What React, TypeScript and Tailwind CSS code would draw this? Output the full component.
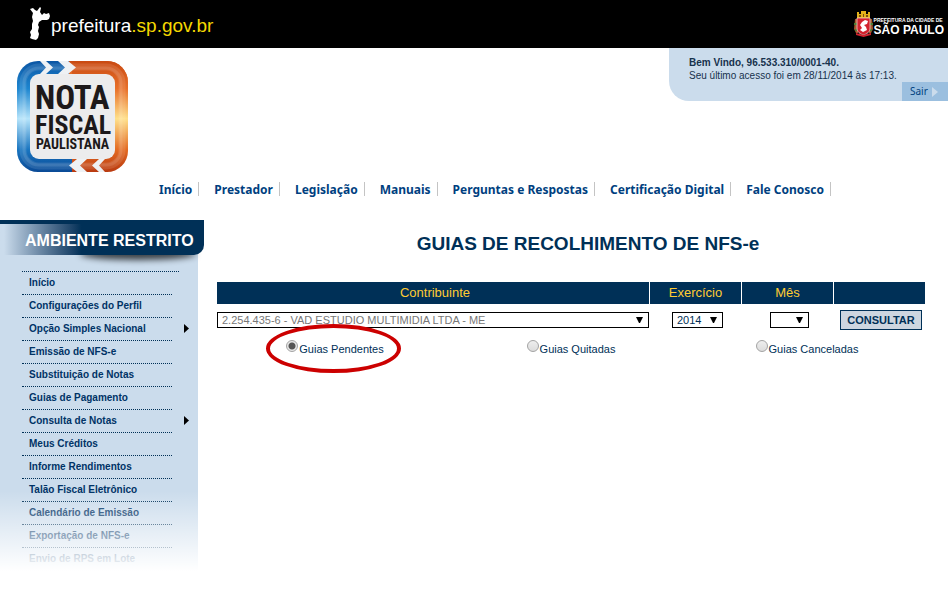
import React from "react";

const nav = ["Início", "Prestador", "Legislação", "Manuais", "Perguntas e Respostas", "Certificação Digital", "Fale Conosco"];

const menu: { label: string; sub?: boolean }[] = [
  { label: "Início" },
  { label: "Configurações do Perfil" },
  { label: "Opção Simples Nacional", sub: true },
  { label: "Emissão de NFS-e" },
  { label: "Substituição de Notas" },
  { label: "Guias de Pagamento" },
  { label: "Consulta de Notas", sub: true },
  { label: "Meus Créditos" },
  { label: "Informe Rendimentos" },
  { label: "Talão Fiscal Eletrônico" },
  { label: "Calendário de Emissão" },
  { label: "Exportação de NFS-e" },
  { label: "Envio de RPS em Lote" },
];

function CityMap() {
  return (
    <svg width="22" height="34" viewBox="0 0 22 34" fill="#fff" aria-hidden="true">
      <path d="M1 2 L4 1 L6 3 L8 4 L11 0 L12 1 L11 5 L13 8 L15 6 L17 7 L20 6 L21 9 L20 12 L18 13 L13 13 L10 15 L9 18 L10 20 L9 24 L10 27 L9 31 L7 33 L3 32 L1 31 L2 28 L1 25 L3 22 L3 17 L4 14 L3 10 L4 6 Z" />
    </svg>
  );
}

function CityArms() {
  return (
    <svg width="19" height="26" viewBox="0 0 19 26" aria-hidden="true">
      <path d="M3 1h2v2h2V0h5v3h2V1h2v6H3z" fill="#e3b21b" />
      <path d="M5 4h2v2H5z M9 3h1v3H9z M12 4h2v2h-2z" fill="#7c4a10" />
      <path d="M1 8h3v14H2L0 18z M15 8h3l1 10-2 4h-2z" fill="#a7582e" />
      <path d="M0 12h3v2H0z M16 12h3v2h-3z M1 18h2v2H1z M16 18h2v2h-2z" fill="#4f7d34" />
      <path d="M3 7h13v10c0 4-3 6-6.500 7C6 23 3 21 3 17z" fill="#d3222e" stroke="#f3dcd8" strokeWidth="0.7" />
      <path d="M6 14l2-3 3-2 3 1-1 3-3 1 2 2 1 3-4 2-3-2 2-2z" fill="#fff" />
      <path d="M2 22l7.500 2 7.500-2v2l-7.500 2L2 24z" fill="#d3222e" />
    </svg>
  );
}

function NotaFiscalLogo() {
  return (
    <svg width="111" height="111" viewBox="0 0 111 111" role="img" aria-label="Nota Fiscal Paulistana">
      <defs>
        <linearGradient id="blue" x1="0" y1="0" x2="0" y2="1">
          <stop offset="0" stopColor="#0b56a4" />
          <stop offset="0.25" stopColor="#1d86d0" />
          <stop offset="0.52" stopColor="#b5e4fb" />
          <stop offset="0.8" stopColor="#1975c0" />
          <stop offset="1" stopColor="#0a4a96" />
        </linearGradient>
        <linearGradient id="orange" x1="0" y1="0" x2="0" y2="1">
          <stop offset="0" stopColor="#c94a12" />
          <stop offset="0.25" stopColor="#e8702a" />
          <stop offset="0.52" stopColor="#ffe08a" />
          <stop offset="0.8" stopColor="#e36a22" />
          <stop offset="1" stopColor="#b93a10" />
        </linearGradient>
        <clipPath id="frame"><rect width="111" height="111" rx="21" /></clipPath>
      </defs>
      <g clipPath="url(#frame)">
        <rect width="56" height="111" fill="url(#blue)" />
        <rect x="52" width="59" height="56" fill="url(#orange)" />
        <rect width="111" height="111" x="55" fill="url(#orange)" />
        <rect x="6" y="6" width="99" height="99" rx="16" fill="none" stroke="#fff" strokeOpacity="0.1" strokeWidth="7" />
        <rect x="7" y="7" width="97" height="97" rx="15" fill="none" stroke="#fff" strokeOpacity="0.1" strokeWidth="3" />
        <path d="M23 0h6l7 6.500-7 6.500h-6l6-6.500z M41 0h10l8 6.500-8 6.500H41l7-6.500z" fill="#eef1f4" />
        <path d="M23 0h6l7 6.500-7 6.500h-6l6-6.500z M41 0h10l8 6.500-8 6.500H41l7-6.500z" fill="#eef1f4" transform="rotate(180 55.5 55.5)" />
        <rect x="13" y="13" width="85" height="85" rx="9" fill="#ececed" />
      </g>
      <g fill="#1d191a" fontFamily="'Roboto Condensed', 'Liberation Sans', sans-serif" fontWeight="700">
        <text x="18" y="48" fontSize="33">NOTA</text>
        <text x="18" y="73" fontSize="26">FISCAL</text>
        <text x="19" y="88" fontSize="14">PAULISTANA</text>
      </g>
    </svg>
  );
}

function Arrow({ className }: { className: string }) {
  return (
    <svg className={className} width="7" height="6" viewBox="0 0 7 6" aria-hidden="true">
      <path d="M0 0h7L4 6H3z" fill="#000" />
    </svg>
  );
}

function Picker({ label, options, className }: { label: string; options: string[]; className: string }) {
  return (
    <span className="relative flex">
      <select aria-label={label} className={`h-4 appearance-none border border-black bg-white pl-1 leading-[14px] outline-none ${className}`}>
        {options.map((o) => <option key={o}>{o}</option>)}
      </select>
      <Arrow className="pointer-events-none absolute right-1.5 top-1 mt-px" />
    </span>
  );
}

function Guide({ label, checked, ringed }: { label: string; checked?: boolean; ringed?: boolean }) {
  return (
    <div className="flex justify-center">
      <label className="relative flex items-start text-[11px] leading-4 text-[#003057]">
        <input
          type="radio"
          name="guias"
          defaultChecked={checked}
          className="mr-px size-3 appearance-none rounded-full border border-[#a3a3a3] bg-linear-to-b from-[#eeeeee] to-[#dcdcdc] checked:bg-[radial-gradient(circle,#555_3px,#e8e8e8_4px)]"
        />
        <span className="pt-px">{label}</span>
        {ringed && <span className="pointer-events-none absolute -left-5 -top-4 h-[49px] w-[135px] rounded-[50%] border-4 border-[#cc0000]" />}
      </label>
    </div>
  );
}

export default function App() {
  return (
    <div className="bg-white font-['Liberation_Sans',Arial,sans-serif]">
      <header className="flex h-12 items-center justify-between bg-black pl-[29px] pr-1">
        <a href="#" className="flex items-center text-[19px] leading-6 text-white">
          <CityMap />
          <span className="pt-1">prefeitura<span className="text-[#f5d800]">.sp.gov.br</span></span>
        </a>
        <div className="flex items-center gap-px text-white">
          <CityArms />
          <div className="pt-1 font-bold">
            <div className="text-[5px] leading-[7px]">PREFEITURA DA CIDADE DE</div>
            <div className="text-[12px] leading-3">SÃO PAULO</div>
          </div>
        </div>
      </header>

      <div className="flex h-[134px] items-start justify-between pl-[17px]">
        <div className="pt-[13px]"><NotaFiscalLogo /></div>
        <div className="w-[279px] rounded-bl-[20px] bg-[#cbdcec] pl-5 pt-2 text-[10px] leading-[13px] text-[#17324d]">
          <p className="font-bold">Bem Vindo, 96.533.310/0001-40.</p>
          <p>Seu último acesso foi em 28/11/2014 às 17:13.</p>
          <div className="flex justify-end">
            <a href="#" className="flex h-[19px] w-[46px] items-center gap-1 bg-[#9bbfdf] pl-2 font-['Noto_Sans',sans-serif] text-[#003f7f]">
              Sair
              <svg width="6" height="10" viewBox="0 0 6 10" aria-hidden="true"><path d="M0 0l6 5-6 5z" fill="#cbdcec" /></svg>
            </a>
          </div>
        </div>
      </div>

      <nav className="flex h-[38px] items-start pl-[159px] font-['Noto_Sans',sans-serif] text-[12px] font-bold leading-4 text-[#003f7f]">
        {nav.map((n) => (
          <a key={n} href="#" className="mr-[15px] h-3.5 whitespace-nowrap border-r border-[#c4c4c4] pr-1.5">{n}</a>
        ))}
      </nav>

      <div className="flex items-start">
        <aside className="relative w-[198px] shrink-0 bg-[#cbdcec]">
          <h2 className="relative z-10 h-[35px] w-[204px] rounded-br-[10px] border-t-4 border-[#003057] bg-linear-to-r from-[#cbdcec] from-2% via-[#003057] via-40% to-[#003057] pl-[25px] pt-[7px] text-[16px] font-bold leading-5 text-white">
            AMBIENTE RESTRITO
          </h2>
          <div className="absolute left-20 top-7 h-3 w-[116px] rounded-[50%] bg-black/70 blur-[3px]" />
          <div className="ml-[22px] mt-4 w-[157px] border-t border-dotted border-[#003057]" />
          <ul className="pl-[22px]">
            {menu.map((m, i) => (
              <li key={m.label} className="flex h-[23px] items-center">
                <a href="#" className={`flex h-full w-[150px] items-center pb-0.5 pl-[7px] text-[10px] font-bold text-[#003366] ${i < menu.length - 1 ? "border-b border-dotted border-[#003057]" : ""}`}>
                  {m.label}
                </a>
                {m.sub && <svg className="mb-0.5 ml-3" width="5" height="9" viewBox="0 0 5 9" aria-hidden="true"><path d="M0 0l5 4.500-5 4.500z" /></svg>}
              </li>
            ))}
          </ul>
          <div className="pointer-events-none absolute inset-x-0 bottom-0 h-20 bg-linear-to-b from-white/0 to-white" />
        </aside>

        <main className="min-w-0 flex-1 pl-[19px] pr-[23px] pt-3">
          <h1 className="pl-[34px] text-center text-[19px] font-bold leading-6 text-[#003057]">GUIAS DE RECOLHIMENTO DE NFS-e</h1>
          <form onSubmit={(e) => e.preventDefault()}>
            <div className="mt-[26px] grid grid-cols-[1fr_91px_91px_91px] gap-x-px text-center text-[13px] leading-[22px] text-[#ffcc33]">
              <div className="bg-[#003057] pl-1">Contribuinte</div>
              <div className="bg-[#003057]">Exercício</div>
              <div className="bg-[#003057]">Mês</div>
              <div className="bg-[#003057]" />
            </div>
            <div className="mt-1.5 grid grid-cols-[1fr_91px_91px_91px] items-center gap-x-px text-[11px]">
              <Picker label="Contribuinte" options={["2.254.435-6 - VAD ESTUDIO MULTIMIDIA LTDA - ME"]} className="w-full text-[#777777]" />
              <div className="flex justify-center pl-1"><Picker label="Exercício" options={["2014"]} className="w-[51px] text-[#003057]" /></div>
              <div className="flex justify-center pl-1"><Picker label="Mês" options={[""]} className="w-[39px]" /></div>
              <button className="ml-1.5 h-5 w-[82px] border border-[#003057] bg-[#cdd6e0] text-[11px] font-bold text-[#003057]">CONSULTAR</button>
            </div>
            <div className="mt-2.5 grid grid-cols-3">
              <Guide label="Guias Pendentes" checked ringed />
              <Guide label="Guias Quitadas" />
              <Guide label="Guias Canceladas" />
            </div>
          </form>
        </main>
      </div>
    </div>
  );
}
